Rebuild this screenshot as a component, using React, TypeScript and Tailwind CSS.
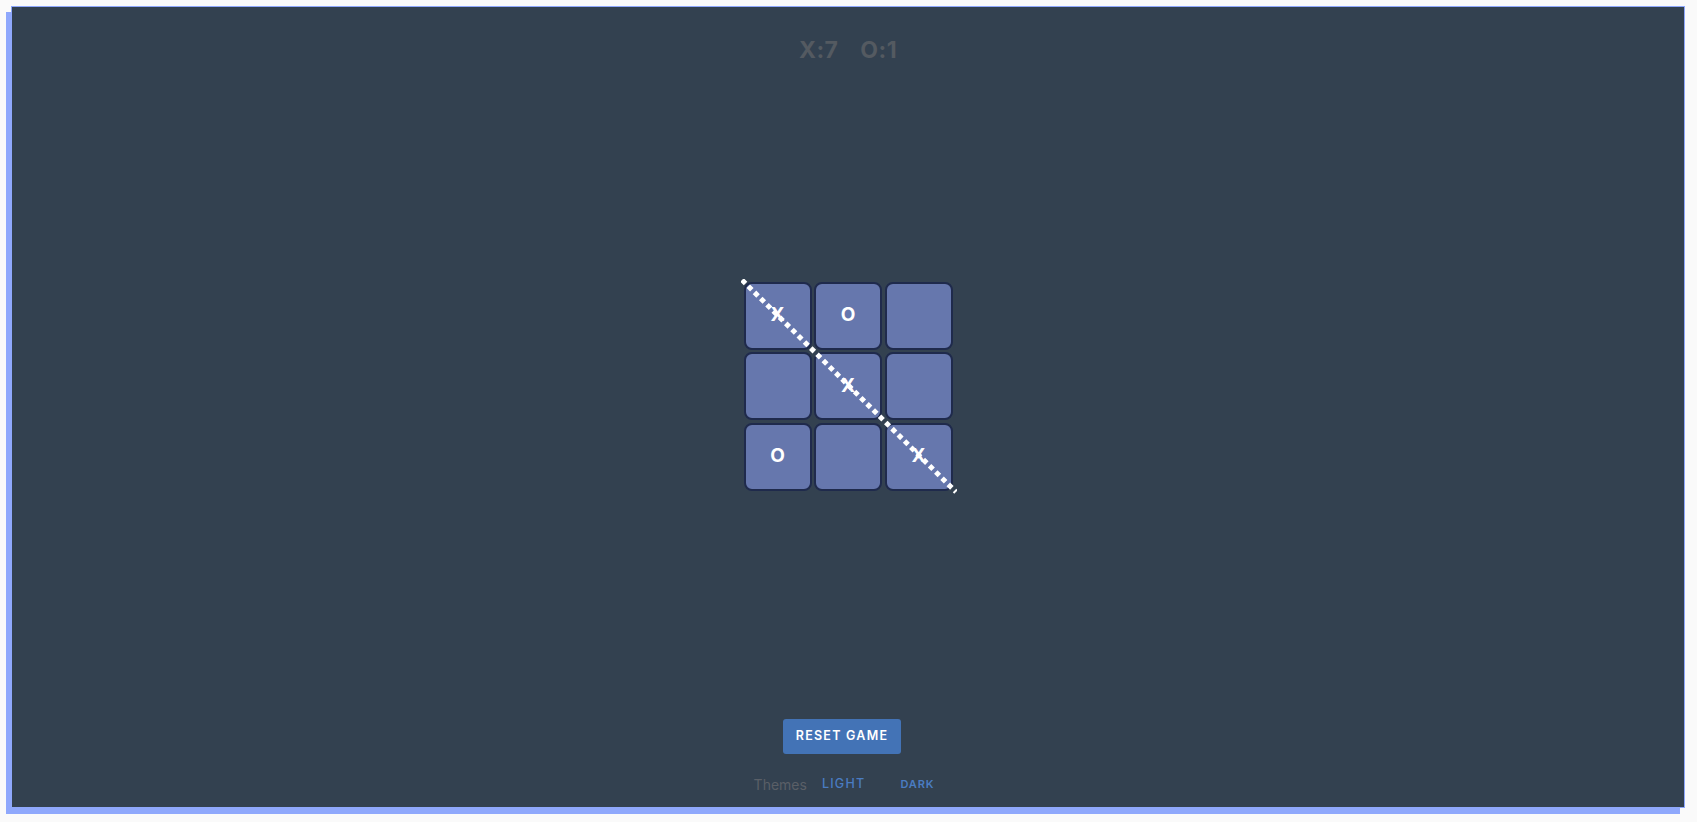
import React from "react";

const board = ["X", "O", "", "", "X", "", "O", "", "X"];

export default function App() {
  return (
    <div className="min-h-screen w-full bg-[#fafafa] pt-[6px] pl-[11px]" style={{ fontFamily: "Inter, 'Liberation Sans', sans-serif" }}>
      <div className="w-[1674px] h-[802px] bg-[#334150] border border-[#8fa8fc] shadow-[-5px_6px_0_0_#8fa8fc] flex flex-col items-center">
        <div className="mt-[32px] h-[22px] flex items-center gap-[22px] text-[23px] leading-none font-bold tracking-[0.02em] text-[#545a61]">
          <span>X:7</span>
          <span>O:1</span>
        </div>
        <div className="flex-1 flex items-center justify-center pb-[8px]">
          <div className="relative">
            <div className="grid grid-cols-[repeat(3,68px)] grid-rows-[repeat(3,68px)] gap-[2.5px]">
              {board.map((v, i) => (
                <div
                  key={i}
                  className="rounded-[8px] bg-[#6677ad] border-2 border-[#1f2a4c] flex items-center justify-center text-white font-bold text-[19px]"
                >
                  {v}
                </div>
              ))}
            </div>
            <svg
              className="absolute left-[-3px] top-[-3px] pointer-events-none"
              width="216"
              height="215"
              viewBox="0 0 216 215"
            >
              <line x1="1" y1="1" x2="215" y2="213" stroke="#ffffff" strokeWidth="5" strokeDasharray="5 3.8" />
            </svg>
          </div>
        </div>
        <button className="w-[118px] h-[35px] rounded-[3px] bg-[#4373b6] text-white text-[12.5px] font-semibold tracking-[0.1em] flex items-center justify-center mr-[12px]">
          RESET GAME
        </button>
        <div className="mt-[18px] mb-[11px] h-[24px] flex items-center mr-[8px]">
          <span className="text-[14px] text-[#5a5f67]">Themes</span>
          <span className="ml-[15px] text-[12.5px] font-medium tracking-[0.1em] text-[#4a7cc2]">LIGHT</span>
          <span className="ml-[35px] text-[11px] font-semibold tracking-[0.08em] text-[#4a7cc2]">DARK</span>
        </div>
      </div>
    </div>
  );
}
